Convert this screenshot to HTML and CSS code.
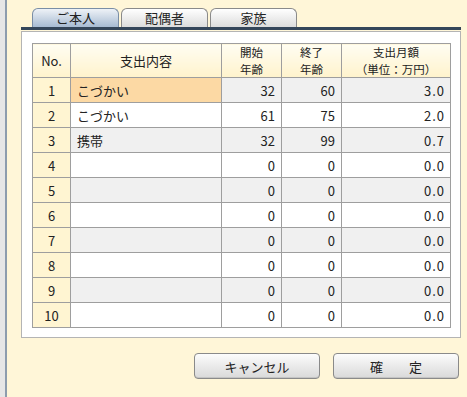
FILE: index.html
```html
<!DOCTYPE html>
<html>
<title>支出設定</title>

<head>
    <link rel="stylesheet" href="styles.css">
</head>

<body>
    <div class="app">
        <div class="side"></div>
        <div class="main">

            <!-- Tabs -->
            <div class="tabs">
                <div class="tab active">ご本人</div>
                <div class="tab">配偶者</div>
                <div class="tab">家族</div>
            </div>

            <!-- Expense table -->
            <div class="panel">
                <table class="grid">
                    <colgroup>
                        <col class="c-no">
                        <col class="c-name">
                        <col class="c-age">
                        <col class="c-age">
                        <col class="c-amt">
                    </colgroup>
                    <thead>
                        <tr>
                            <th>No.</th>
                            <th>支出内容</th>
                            <th class="two">開始<br>年齢</th>
                            <th class="two">終了<br>年齢</th>
                            <th class="two">支出月額<br>（単位：万円）</th>
                        </tr>
                    </thead>
                    <tbody>
                        <tr class="odd">
                            <td class="no">1</td>
                            <td class="name sel">こづかい</td>
                            <td class="num">32</td>
                            <td class="num">60</td>
                            <td class="num amt">3.0</td>
                        </tr>
                        <tr>
                            <td class="no">2</td>
                            <td class="name">こづかい</td>
                            <td class="num">61</td>
                            <td class="num">75</td>
                            <td class="num amt">2.0</td>
                        </tr>
                        <tr class="odd">
                            <td class="no">3</td>
                            <td class="name">携帯</td>
                            <td class="num">32</td>
                            <td class="num">99</td>
                            <td class="num amt">0.7</td>
                        </tr>
                        <tr>
                            <td class="no">4</td>
                            <td class="name"></td>
                            <td class="num">0</td>
                            <td class="num">0</td>
                            <td class="num amt">0.0</td>
                        </tr>
                        <tr class="odd">
                            <td class="no">5</td>
                            <td class="name"></td>
                            <td class="num">0</td>
                            <td class="num">0</td>
                            <td class="num amt">0.0</td>
                        </tr>
                        <tr>
                            <td class="no">6</td>
                            <td class="name"></td>
                            <td class="num">0</td>
                            <td class="num">0</td>
                            <td class="num amt">0.0</td>
                        </tr>
                        <tr class="odd">
                            <td class="no">7</td>
                            <td class="name"></td>
                            <td class="num">0</td>
                            <td class="num">0</td>
                            <td class="num amt">0.0</td>
                        </tr>
                        <tr>
                            <td class="no">8</td>
                            <td class="name"></td>
                            <td class="num">0</td>
                            <td class="num">0</td>
                            <td class="num amt">0.0</td>
                        </tr>
                        <tr class="odd">
                            <td class="no">9</td>
                            <td class="name"></td>
                            <td class="num">0</td>
                            <td class="num">0</td>
                            <td class="num amt">0.0</td>
                        </tr>
                        <tr>
                            <td class="no">10</td>
                            <td class="name"></td>
                            <td class="num">0</td>
                            <td class="num">0</td>
                            <td class="num amt">0.0</td>
                        </tr>
                    </tbody>
                </table>
            </div>

            <!-- Buttons -->
            <div class="buttons">
                <button class="btn">キャンセル</button>
                <button class="btn">確　　定</button>
            </div>

        </div>
    </div>
</body>

</html>
```

FILE: styles.css
```css
* {
    box-sizing: border-box;
}

body {
    margin: 0;
    font-family: "Noto Sans CJK JP", "DejaVu Sans", sans-serif;
    font-size: 13px;
    color: #222;
}

.app {
    display: flex;
    height: 397px;
    background-color: #fff6d8;
}

/* Left window edge */
.side {
    width: 7px;
    background-color: #e6e6e6;
    border-right: 2px solid #8d9cad;
}

.main {
    flex: 1;
    padding: 8px 6px 0 14px;
}

/* Tabs */
.tabs {
    display: flex;
    gap: 2px;
    padding-left: 11px;
    height: 22px;
    border-bottom: 3px solid #34465a;
}

.tab {
    width: 87px;
    height: 19px;
    line-height: 18px;
    text-align: center;
    border: 1px solid #8a8a8a;
    border-bottom: none;
    border-radius: 6px 6px 0 0;
    background: linear-gradient(#ffffff, #dcdcdc);
}

.tab.active {
    background: linear-gradient(#eef2f7, #a7bbd2);
    border-color: #7a8ea6;
}

/* Panel with table */
.panel {
    width: 440px;
    height: 307px;
    margin-top: 1px;
    padding: 11px 0 0 10px;
    background-color: #ffffff;
    border: 1px solid #b4b4b4;
}

.grid {
    border-collapse: collapse;
    table-layout: fixed;
    width: 418px;
}

.c-no {
    width: 38px;
}

.c-name {
    width: 151px;
}

.c-age {
    width: 60px;
}

.c-amt {
    width: 109px;
}

.grid th,
.grid td {
    border: 1px solid #9e9e9e;
    padding: 0 7px;
    font-weight: normal;
}

.grid th {
    height: 34px;
    background: linear-gradient(#fffdf2, #fff3cc);
    text-align: center;
}

.grid th.two {
    font-size: 11.5px;
    line-height: 16.5px;
    padding: 0 4px;
}

.grid td {
    height: 25px;
    background-color: #ffffff;
}

.grid tr.odd td {
    background-color: #f0f0f0;
}

.grid td.no,
.grid tr.odd td.no {
    text-align: center;
    background-color: #fff5d2;
}

.grid td.name {
    padding-left: 6px;
}

.grid td.num {
    text-align: right;
    padding-right: 6px;
}

.grid td.amt {
    letter-spacing: 1px;
    padding-right: 5px;
}

.grid td.sel,
.grid tr.odd td.sel {
    background-color: #fcd9a4;
}

/* Buttons */
.buttons {
    display: flex;
    justify-content: flex-end;
    gap: 13px;
    margin-top: 15px;
    padding-right: 2px;
}

.btn {
    width: 126px;
    height: 26px;
    font-family: "Noto Sans CJK JP", "DejaVu Sans", sans-serif;
    font-size: 13px;
    color: #222;
    border: 1px solid #8a8a8a;
    border-radius: 4px;
    background: linear-gradient(#fcfcfc, #d9d9d9);
    box-shadow: inset 0 -1px 0 #c4c4c4;
}
```
